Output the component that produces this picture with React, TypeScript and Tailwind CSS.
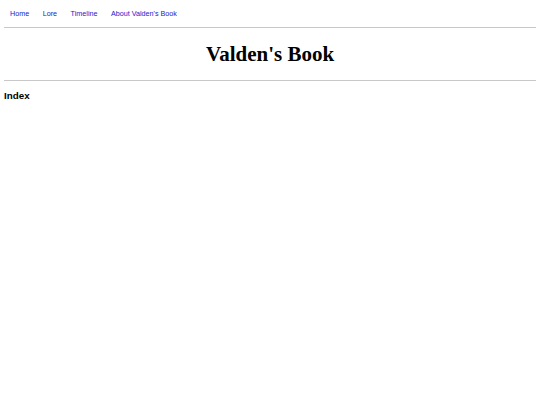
import React from 'react';

const links = ['Home', 'Lore', 'Timeline', "About Valden's Book"];

export default function App() {
  return (
    <div className="min-h-[405px] bg-white px-[4px] font-['Liberation_Sans',Arial,sans-serif]">
      <nav className="flex gap-[13.5px] pl-[6px] pt-[9px] pb-[9px]">
        {links.map((l) => (
          <a key={l} href="#" className="text-[7.2px] leading-[9px] text-[#1a1acc]">
            {l}
          </a>
        ))}
      </nav>
      <hr className="border-t border-[#c8c8c8]" />
      <h1 className="py-[15px] text-center font-['Liberation_Serif','Times_New_Roman',serif] text-[21px] font-bold leading-[22px] text-black">
        Valden's Book
      </h1>
      <hr className="border-t border-[#c8c8c8]" />
      <h3 className="pt-[9px] text-[9.8px] font-bold leading-[12px] text-black">Index</h3>
    </div>
  );
}
